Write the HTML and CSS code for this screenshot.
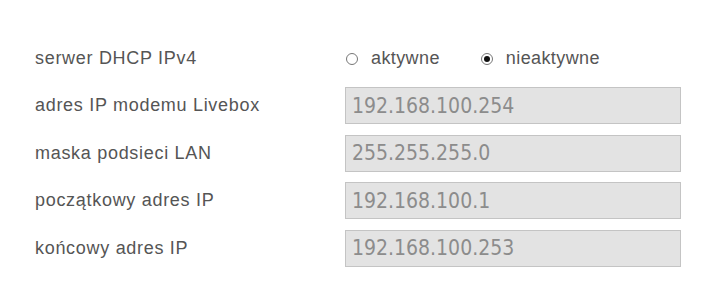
FILE: index.html
```html
<!DOCTYPE html>
<html lang="pl">
<head>
    <meta charset="UTF-8">
    <title>DHCP</title>
    <link rel="stylesheet" href="styles.css">
</head>
<body>
    <div class="form">
        <div class="label">serwer DHCP IPv4</div>
        <div class="radios">
            <span class="radio"><span class="dot"></span>aktywne</span>
            <span class="radio checked"><span class="dot"></span>nieaktywne</span>
        </div>

        <div class="label">adres IP modemu Livebox</div>
        <div class="field">192.168.100.254</div>

        <div class="label">maska podsieci LAN</div>
        <div class="field">255.255.255.0</div>

        <div class="label">początkowy adres IP</div>
        <div class="field">192.168.100.1</div>

        <div class="label">końcowy adres IP</div>
        <div class="field">192.168.100.253</div>
    </div>
</body>
</html>
```
FILE: styles.css
```css
body {
    margin: 0;
    background: #fff;
    font-family: "Liberation Sans", Arial, sans-serif;
}
.form {
    display: grid;
    grid-template-columns: 310px 336px;
    grid-auto-rows: 37px;
    row-gap: 10.4px;
    padding: 40px 0 0 35px;
}
.label {
    display: flex;
    align-items: center;
    font-size: 18px;
    letter-spacing: 0.7px;
    color: #555;
}
.radios {
    display: flex;
    align-items: center;
    font-size: 18px;
    letter-spacing: 0.4px;
    color: #555;
}
.radio {
    display: flex;
    align-items: center;
    margin-right: 40px;
}
.dot {
    width: 12px;
    height: 12px;
    border: 1px solid #777;
    border-radius: 50%;
    margin: 0 13px 0 1px;
    box-sizing: border-box;
    position: relative;
}
.checked .dot::after {
    content: "";
    position: absolute;
    left: 2px;
    top: 2px;
    width: 6px;
    height: 6px;
    border-radius: 50%;
    background: #111;
}
.field {
    display: flex;
    align-items: center;
    box-sizing: border-box;
    background: #e3e3e3;
    border: 1px solid #c4c4c4;
    padding-left: 6px;
    font-family: "DejaVu Sans Condensed", "DejaVu Sans", Tahoma, sans-serif;
    font-size: 21px;
    color: #8c8c8c;
}
```
